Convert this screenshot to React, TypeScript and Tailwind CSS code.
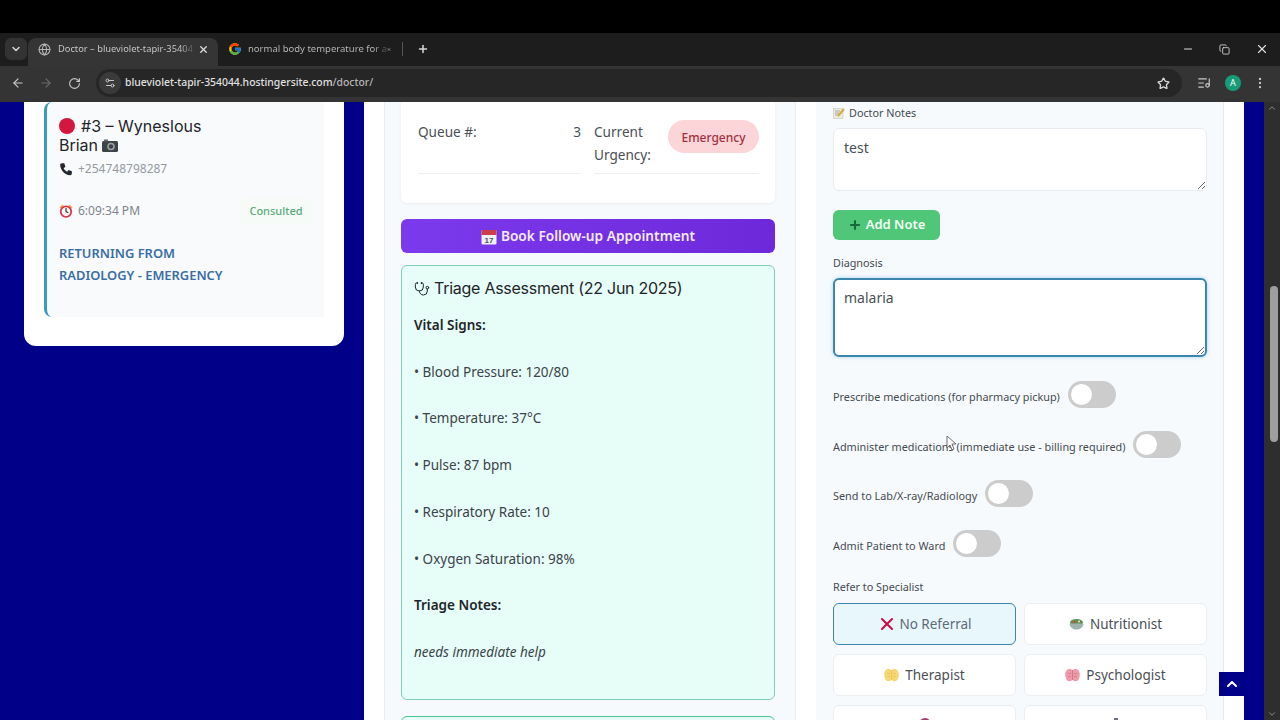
import { ArrowLeft, ArrowRight, ChevronDown, ChevronUp, Copy, EllipsisVertical, Globe, ListMusic, Minus, Plus, RotateCw, Settings2, Star, Stethoscope, X } from 'lucide-react'
import { FcGoogle } from 'react-icons/fc'

const body = { fontFamily: '"Noto Sans", "Open Sans", sans-serif' }

function RedDot() {
  return <span className="inline-block w-4 h-4 rounded-full bg-[#d3173f] mr-1.5 align-[-2px]" />
}

function Camera() {
  return (
    <svg className="inline-block ml-1 align-[-1px]" width="16" height="13" viewBox="0 0 16 13">
      <rect x="0" y="2" width="16" height="11" rx="1.5" fill="#3d4347" />
      <rect x="2" y="0.5" width="4" height="2" fill="#60686d" />
      <circle cx="9" cy="7.5" r="3.8" fill="#9aa3a8" />
      <circle cx="9" cy="7.5" r="2.2" fill="#3d4347" />
    </svg>
  )
}

function PhoneIcon() {
  return (
    <svg width="14" height="14" viewBox="0 0 24 24">
      <path d="M5 2 9 2 11 8 8 10.500C9.500 13.500 11 15 14 16.500L16.500 13.500 22 16 22 20C22 21.500 20.500 22.500 19 22.500 10 22 2.500 14 2 5 2 3.500 3.500 2 5 2Z" fill="#23292e" />
    </svg>
  )
}

function AlarmIcon() {
  return (
    <svg width="14" height="14" viewBox="0 0 24 24" fill="none">
      <path d="M2 7 7 2M22 7 17 2" stroke="#f4a63a" strokeWidth="3" />
      <circle cx="12" cy="13" r="9" fill="#fff" stroke="#d8344a" strokeWidth="3" />
      <path d="M12 7v6l4 2" stroke="#333" strokeWidth="2" />
    </svg>
  )
}

function CalendarIcon() {
  return (
    <svg className="mr-1" width="16" height="16" viewBox="0 0 16 16">
      <rect x="0.500" y="1" width="15" height="14.500" rx="1" fill="#eef0f3" />
      <rect x="0.500" y="1" width="15" height="5" fill="#c9404a" />
      <text x="8" y="14" textAnchor="middle" fontSize="8" fill="#4a5560" fontFamily="Liberation Sans">17</text>
    </svg>
  )
}

function MemoIcon() {
  return (
    <svg width="12" height="12" viewBox="0 0 12 12" className="mr-[4px]">
      <rect x="0.500" y="1.500" width="9.500" height="10" fill="#ececdc" stroke="#b9bcb8" strokeWidth="0.500" />
      <path d="M2 4h5M2 6h4M2 8h3" stroke="#8a9096" strokeWidth="0.700" />
      <path d="M5 9 11 2" stroke="#d8a93a" strokeWidth="2" />
    </svg>
  )
}

function SaladIcon() {
  return (
    <svg width="15" height="12" viewBox="0 0 15 12" className="mr-[2px]">
      <ellipse cx="7.500" cy="4.500" rx="6.500" ry="3.500" fill="#5f8f52" />
      <circle cx="5" cy="4" r="1.300" fill="#c9513f" />
      <circle cx="10" cy="3.500" r="1.100" fill="#e8e2c0" />
      <path d="M0.500 5.500h14C14 9.500 11 11.500 7.500 11.500S1 9.500 0.500 5.500Z" fill="#9fb2ae" />
    </svg>
  )
}

function BrainIcon({ color, shade }: { color: string; shade: string }) {
  return (
    <svg width="15" height="14" viewBox="0 0 15 14" className="mr-[2px]">
      <ellipse cx="4.500" cy="7" rx="4.300" ry="6.300" fill={color} />
      <ellipse cx="10.500" cy="7" rx="4.300" ry="6.300" fill={color} />
      <path d="M7.500 2v10M3 5c1 1 2 1 3 0M3 9c1-1 2-1 3 0M9 5c1 1 2 1 3 0M9 9c1-1 2-1 3 0" stroke={shade} strokeWidth="0.800" fill="none" />
    </svg>
  )
}

function Toggle() {
  return (
    <span className="inline-flex items-center w-12 h-[27px] rounded-full bg-[#cccccc] pl-[3px] shrink-0">
      <span className="w-[21px] h-[21px] rounded-full bg-white" />
    </span>
  )
}

function ToggleRow({ label }: { label: string }) {
  return (
    <div className="flex items-center gap-2 h-[27px]">
      <span className="pt-[6px] text-[10.850px] text-[#444b52]">{label}</span>
      <Toggle />
    </div>
  )
}

function Referral({ children, active }: { children: React.ReactNode; active?: boolean }) {
  return (
    <div
      className={`h-[42px] rounded-md flex items-center justify-center gap-1 pt-[1px] text-[13.500px] border ${
        active ? 'bg-[#e8f7fc] border-[#3b86ad] text-[#5c6b78]' : 'bg-white border-[#eceff2] text-[#4a4f55]'
      }`}
    >
      {children}
    </div>
  )
}

function Browser() {
  return (
    <div className="shrink-0" style={{ fontFamily: '"Noto Sans", sans-serif' }}>
      <div className="h-[33px] bg-black" />
      <div className="h-[33px] bg-[#1d1d1d] flex items-end pl-[5px]">
        <div className="self-start mt-[5px] w-[22px] h-[22px] rounded-md bg-[#333333] flex items-center justify-center">
          <ChevronDown size={12} strokeWidth={3} className="text-[#d5d5d5]" />
        </div>
        <div className="ml-px w-[190px] h-[28px] rounded-t-lg bg-[#353535] flex items-center pb-[6px] pl-[10px] pr-[9px]">
          <Globe size={13} className="text-[#b5b5b5] shrink-0" />
          <span className="ml-[7px] whitespace-nowrap text-[9.300px] bg-gradient-to-r from-[#cfcfcf] from-90% to-[#555555] bg-clip-text text-transparent">Doctor – blueviolet-tapir-35404</span>
          <X size={11} strokeWidth={3} className="ml-auto text-[#d8d8d8]" />
        </div>
        <div className="h-[28px] flex items-center pb-[6px] pl-[10px] w-[190px]">
          <FcGoogle size={14} className="shrink-0" />
          <span className="ml-[6px] whitespace-nowrap text-[9.500px] bg-gradient-to-r from-[#bdbdbd] from-90% to-[#444444] bg-clip-text text-transparent">normal body temperature for a</span>
          <X size={11} strokeWidth={3} className="ml-auto mr-[17px] text-[#cfcfcf]" />
        </div>
        <div className="h-[28px] flex items-center pb-[6px]">
          <span className="w-px h-[14px] bg-[#555555] ml-[-6px]" />
          <Plus size={12} strokeWidth={3} className="ml-[14px] text-[#d8d8d8]" />
        </div>
        <div className="ml-auto h-[28px] flex items-center pb-[6px] gap-[25px] pr-[11px] text-[#dddddd]">
          <Minus size={12} />
          <Copy size={11} strokeWidth={1.800} />
          <X size={14} />
        </div>
      </div>
      <div className="h-[36px] bg-[#343434] flex items-center pb-[2px] pl-[11px] pr-[12px] text-[#c8c8c8]">
        <ArrowLeft size={14} />
        <ArrowRight size={14} className="ml-[14px] text-[#6a6a6a]" />
        <RotateCw size={13} className="ml-[15px]" />
        <div className="ml-[15px] w-[1086px] h-[28px] rounded-full bg-[#262626] flex items-center pl-[3px] pr-[12px]">
          <span className="w-[22px] h-[22px] rounded-full bg-[#3a3a3a] flex items-center justify-center">
            <Settings2 size={12} />
          </span>
          <span className="ml-[4px] text-[10.400px] font-medium text-[#e0e0e0]">
            blueviolet-tapir-354044.hostingersite.com<span className="text-[#b5b5b5]">/doctor/</span>
          </span>
          <Star size={13} strokeWidth={2.500} className="ml-auto text-[#d8d8d8]" />
        </div>
        <ListMusic size={14} className="ml-[15px]" />
        <span className="ml-[14px] w-[16px] h-[16px] rounded-full bg-[#189c78] text-white text-[9px] flex items-center justify-center">A</span>
        <EllipsisVertical size={14} className="ml-[12px]" />
      </div>
    </div>
  )
}

function QueueCard() {
  return (
    <div className="h-[101px] bg-white rounded-b-md shadow-[0_1px_3px_rgba(0,0,0,0.06)] pl-[17px] pr-[16px] flex gap-[13px] text-[13.600px] leading-[23px] text-[#4a4f55]">
      <div className="w-[163px] h-[72px] border-b border-[#eef0f2] flex justify-between pt-[18px]">
        <span>Queue #:</span>
        <span>3</span>
      </div>
      <div className="w-[165px] h-[72px] border-b border-[#eef0f2] flex justify-between pt-[18px]">
        <span>
          Current
          <br />
          Urgency:
        </span>
        <span className="self-start h-[33px] w-[91px] rounded-full bg-[#fcd5d8] text-[#a3303d] text-[12px] font-medium flex items-center justify-center pt-[1px]">Emergency</span>
      </div>
    </div>
  )
}

function TriageCard() {
  const vitals = ['Blood Pressure: 120/80', 'Temperature: 37°C', 'Pulse: 87 bpm', 'Respiratory Rate: 10', 'Oxygen Saturation: 98%']
  return (
    <div className="mt-[12px] h-[435px] rounded-md border border-[#7fcdb6] bg-[#e6fdf8] px-3 pt-[12px] text-[13.500px] leading-[23.400px] text-[#3c4349]">
      <div className="flex items-center gap-1 h-[22px] text-[#1f2529] text-[16px] tracking-[-0.260px]" style={{ fontFamily: 'Inter, sans-serif' }}>
        <Stethoscope size={16} strokeWidth={1.500} />
        <span>Triage Assessment (22 Jun 2025)</span>
      </div>
      <div className="mt-[14px] flex flex-col gap-[23.300px]">
        <b className="font-semibold text-[#1f2529]">Vital Signs:</b>
        {vitals.map((v) => (
          <span key={v}>• {v}</span>
        ))}
        <b className="font-semibold text-[#1f2529]">Triage Notes:</b>
        <i>needs immediate help</i>
      </div>
    </div>
  )
}

function RightColumn() {
  return (
    <div className="w-[408px] bg-[#f7fafc] border-r border-[#e6eaee] px-[17px] pt-[4px] overflow-hidden">
      <div className="flex items-center h-[14px] text-[10.800px] text-[#444b52]">
        <MemoIcon />
        Doctor Notes
      </div>
      <textarea
        readOnly
        defaultValue="test"
        className="mt-[8px] block w-[374px] h-[63px] rounded-md bg-white border border-[#e8ebef] px-[10px] py-[9px] text-[14px] leading-[20px] text-[#4a4f55] outline-none"
      />
      <button className="mt-[19px] w-[107px] h-[30px] rounded-md bg-[#4fc678] text-[#f2fff6] text-[13px] font-semibold flex items-center justify-center gap-1">
        <Plus size={14} strokeWidth={3.500} className="text-[#176b38]" />
        Add Note
      </button>
      <div className="mt-[15px] h-[16px] text-[10.800px] text-[#444b52] flex items-center">Diagnosis</div>
      <textarea
        readOnly
        defaultValue="malaria"
        className="mt-[7px] block w-[374px] h-[79px] rounded-md bg-white border-2 border-[#3b86ad] shadow-[0_0_4px_rgba(80,170,220,0.45)] px-[9px] py-[8px] text-[14px] leading-[20px] text-[#4a4f55] outline-none"
      />
      <div className="mt-[24px] flex flex-col gap-[22.500px]">
        <ToggleRow label="Prescribe medications (for pharmacy pickup)" />
        <ToggleRow label="Administer medications (immediate use - billing required)" />
        <ToggleRow label="Send to Lab/X-ray/Radiology" />
        <ToggleRow label="Admit Patient to Ward" />
      </div>
      <div className="mt-[23px] h-[16px] text-[10.800px] text-[#444b52] flex items-center">Refer to Specialist</div>
      <div className="mt-[7px] grid grid-cols-[183px_183px] gap-x-2 gap-y-[9px]">
        <Referral active>
          <X size={20} strokeWidth={2.500} className="text-[#c8104f] -mr-[2px]" />
          No Referral
        </Referral>
        <Referral>
          <SaladIcon />
          Nutritionist
        </Referral>
        <Referral>
          <BrainIcon color="#f7d774" shade="#e6bd50" />
          Therapist
        </Referral>
        <Referral>
          <BrainIcon color="#ee9aa8" shade="#cf6f80" />
          Psychologist
        </Referral>
        <div className="h-[42px] rounded-md bg-white border border-[#eceff2] flex justify-center pt-[12px]">
          <span className="w-3 h-3 rounded-full bg-[#a33b6b]" />
        </div>
        <div className="h-[42px] rounded-md bg-white border border-[#eceff2] flex justify-center pt-[12px]">
          <span className="w-1 h-3 bg-[#6b7280]" />
        </div>
      </div>
    </div>
  )
}

export default function App() {
  return (
    <div className="relative w-[1280px] h-[720px] overflow-hidden flex flex-col bg-black" style={body}>
      <Browser />
      <div className="flex flex-1 min-h-0">
        <div className="w-[1264px] bg-[#000088] flex pl-6 gap-5 min-h-0">
          <div className="w-[320px] h-[244px] bg-white rounded-b-xl px-5">
            <div className="w-[280px] h-[215px] bg-[#f8fafc] border-l-[3px] border-[#3a9ac0] rounded-l-lg pl-[12px] pt-[15px]">
              <div className="w-[170px] text-[16px] leading-[19px] text-[#1f2529]" style={{ fontFamily: 'Inter, sans-serif' }}>
                <RedDot />
                #3 – Wyneslous Brian
                <Camera />
              </div>
              <div className="mt-[5px] flex items-center gap-[5px] h-[18px] text-[12px] text-[#959aa0]">
                <PhoneIcon />
                +254748798287
              </div>
              <div className="mt-[24px] flex items-center h-[18px] text-[12px] text-[#7f858b] pr-[12px]">
                <AlarmIcon />
                <span className="ml-[5px]">6:09:34 PM</span>
                <span className="ml-auto w-[72px] h-[26px] rounded bg-[#f6fbf8] text-[#5aab77] text-[11px] font-medium flex items-center justify-center">Consulted</span>
              </div>
              <div className="mt-[23px] text-[12.900px] leading-[21.500px] font-semibold text-[#3a6ea5]">
                RETURNING FROM
                <br />
                RADIOLOGY - EMERGENCY
              </div>
            </div>
          </div>
          <div className="w-[880px] bg-white px-5 flex gap-5 min-h-0">
            <div className="w-[412px] bg-[#f7fafc] border-x border-[#e9edf0] pl-4 pr-5 overflow-hidden">
              <QueueCard />
              <button className="mt-[16px] w-[374px] h-[34px] rounded-md bg-gradient-to-r from-[#7c3aed] to-[#6d28d9] pt-[1px] text-[#f5eaff] text-[13.700px] font-semibold flex items-center justify-center">
                <CalendarIcon />
                Book Follow-up Appointment
              </button>
              <TriageCard />
              <div className="mt-[16px] h-[40px] rounded-t-md border border-[#4ec28f] bg-[#e6fdf8]" />
            </div>
            <RightColumn />
          </div>
        </div>
        <div className="w-4 bg-[#2e2e2e] flex flex-col items-center">
          <ChevronUp size={10} className="mt-[1px] text-[#9e9e9e]" />
          <div className="mt-[173px] ml-[4px] w-[8px] h-[156px] rounded-full bg-[#9e9e9e]" />
          <ChevronDown size={10} className="mt-auto mb-[1px] text-[#9e9e9e]" />
        </div>
      </div>
      <div className="absolute left-[1219px] top-[672px] w-[25px] h-[24px] bg-[#000088] flex items-center justify-center">
        <ChevronUp size={16} strokeWidth={3} className="text-white" />
      </div>
      <svg className="absolute left-[946px] top-[435px]" width="11" height="16" viewBox="0 0 11 16">
        <path d="M1 1v12l3-3 2 5 2-1-2-5h4Z" fill="#fff" stroke="#4a4f55" strokeWidth="0.800" />
      </svg>
    </div>
  )
}
